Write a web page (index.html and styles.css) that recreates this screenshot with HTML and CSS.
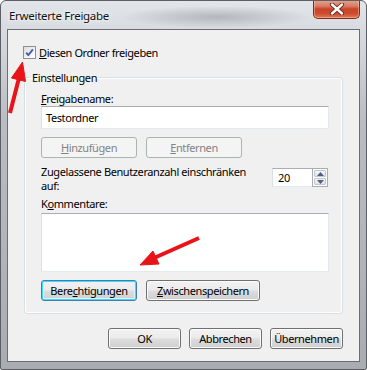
FILE: index.html
```html
<!DOCTYPE html>
<html lang="de">
<head>
<meta charset="utf-8">
<title>Erweiterte Freigabe</title>
<link rel="stylesheet" href="styles.css">
</head>
<body>
<div class="window">
  <div class="titlebar">
    <span class="title">Erweiterte Freigabe</span>
    <div class="close">
      <svg width="20" height="12" viewBox="0 0 20 12"><path d="M5 1.5 L15 10.5 M15 1.5 L5 10.5" stroke="#5a2418" stroke-width="4.2" stroke-linecap="round"/><path d="M5 1.5 L15 10.5 M15 1.5 L5 10.5" stroke="#ffffff" stroke-width="2.4" stroke-linecap="round"/></svg>
    </div>
  </div>
  <div class="client">
    <div class="check-row">
      <span class="checkbox"><svg width="11" height="11" viewBox="0 0 11 11"><path d="M2.2 5.6 L4.3 8.2 L8.9 2.4" fill="none" stroke="#4a5fb0" stroke-width="1.9" stroke-linejoin="round"/></svg></span>
      <span><u>D</u>iesen Ordner freigeben</span>
    </div>
    <fieldset class="group">
      <legend>Einstellungen</legend>
      <div class="label"><u>F</u>reigabename:</div>
      <div class="textbox">Testordner</div>
      <div class="btn-row">
        <span class="btn disabled"><u>H</u>inzufügen</span>
        <span class="btn disabled"><u>E</u>ntfernen</span>
      </div>
      <div class="limit-row">
        <div class="limit-label">Zu<u>g</u>elassene Benutzeranzahl einschränken auf:</div>
        <div class="spinner">
          <div class="spin-value">20</div>
          <div class="spin-buttons">
            <span class="spin up"><svg width="7" height="4" viewBox="0 0 7 4"><path d="M0 4 L3.5 0 L7 4Z" fill="#4d5f87"/></svg></span>
            <span class="spin down"><svg width="7" height="4" viewBox="0 0 7 4"><path d="M0 0 L3.5 4 L7 0Z" fill="#4d5f87"/></svg></span>
          </div>
        </div>
      </div>
      <div class="label comments">K<u>o</u>mmentare:</div>
      <div class="textarea"></div>
      <div class="btn-row">
        <span class="btn default">Bere<u>c</u>htigungen</span>
        <span class="btn wide"><u>Z</u>wischenspeichern</span>
      </div>
    </fieldset>
    <div class="footer">
      <span class="btn footer-btn">OK</span>
      <span class="btn footer-btn">Abbrechen</span>
      <span class="btn footer-btn">Übernehmen</span>
    </div>
  </div>
  <svg class="arrows" width="367" height="370" viewBox="0 0 367 370">
    <g fill="#e8141a" stroke="#e8141a">
      <path d="M10 113 L19 78" stroke-width="4" fill="none"/>
      <path d="M22.5 62 L25.5 81.5 L11.5 78 Z" stroke-width="1"/>
      <path d="M199 238 L154 258" stroke-width="4" fill="none"/>
      <path d="M140 265 L159 264 L153 251 Z" stroke-width="1"/>
    </g>
  </svg>
</div>
</body>
</html>
```
FILE: styles.css
```css
* { box-sizing: border-box; }
html, body { margin: 0; padding: 0; background: #ffffff; }
body {
  font-family: "Noto Sans", "Open Sans", sans-serif;
  font-size: 11px;
  letter-spacing: -0.4px;
  color: #000;
}
u { text-decoration: underline; text-underline-offset: 1px; }

.window {
  position: relative;
  width: 367px;
  height: 370px;
  border: 1px solid #5c5f63;
  border-radius: 6px 6px 2px 2px;
  padding: 0 6px 7px 6px;
  display: flex;
  flex-direction: column;
  background:
    radial-gradient(ellipse 95px 11px at 215px 16px, rgba(110,116,124,0.38), rgba(110,116,124,0) 100%),
    linear-gradient(180deg, #e2e5e9 0px, #d8dce0 28px, #b9bdc2 120px, #a9adb2 370px);
  overflow: hidden;
}

.titlebar {
  height: 28px;
  display: flex;
  align-items: center;
  padding-left: 2px;
}
.title { font-size: 11.5px; letter-spacing: -0.3px; color: #111; text-shadow: 0 0 6px #f4f6f8, 0 0 3px #ffffff; }
.close {
  margin-left: auto;
  align-self: flex-start;
  width: 47px;
  height: 19px;
  margin-top: -1px;
  border: 1px solid #7a2c1e;
  border-top: none;
  border-radius: 0 0 5px 5px;
  background: linear-gradient(180deg, #e9a491 0%, #d97a62 35%, #c7432a 50%, #cf4b2e 75%, #e07a52 100%);
  box-shadow: inset 0 0 0 1px rgba(255,210,190,0.45);
  display: flex;
  align-items: center;
  justify-content: center;
}

.client {
  flex: 1;
  background: #f0f0f0;
  border: 1px solid #6a6e73;
  padding: 15px 16px 0 16px;
  display: flex;
  flex-direction: column;
}

.check-row {
  height: 15px;
  display: flex;
  align-items: center;
  gap: 3px;
  margin-left: -1px;
}
.checkbox {
  width: 13px;
  height: 13px;
  border: 1px solid #8e8f8f;
  background: linear-gradient(135deg, #dcdcdc 0%, #f4f4f4 60%, #ffffff 100%);
  display: flex;
  align-items: center;
  justify-content: center;
}

.group {
  margin: 10px 0 0 0;
  padding: 6px 13px 12px 16px;
  border: 1px solid #d5dfe5;
  border-radius: 3px;
  min-width: 0;
  box-shadow: inset 0 0 0 1px #ffffff;
}
.group legend {
  padding: 0 2px;
  margin-left: -11px;
  line-height: 15px;
}

.label { line-height: 15px; }
.textbox {
  height: 23px;
  background: #fff;
  border: 1px solid;
  border-color: #abadb3 #e3e9ef #e3e9ef #dbdfe6;
  padding: 0 4px;
  display: flex;
  align-items: center;
}

.btn-row { display: flex; gap: 9px; margin-top: 8px; }
.btn {
  height: 21px;
  width: 96px;
  display: flex;
  align-items: center;
  justify-content: center;
  border: 1px solid #707070;
  border-radius: 3px;
  background: linear-gradient(180deg, #f2f2f2 0%, #ebebeb 48%, #dddddd 52%, #cfcfcf 100%);
  box-shadow: inset 0 0 0 1px #fbfbfb;
  white-space: nowrap;
}
.btn.disabled {
  color: #838383;
  border-color: #adb2b5;
  background: #f4f4f4;
  box-shadow: none;
}
.btn.default {
  border-color: #3c7fb1;
  box-shadow: inset 0 0 0 1px #48d8fb, inset 0 0 0 2px #dff3fc;
  background: linear-gradient(180deg, #f2f2f2 0%, #ebebeb 48%, #dddddd 52%, #cfcfcf 100%);
}
.btn.wide { width: 114px; }

.limit-row {
  display: flex;
  justify-content: space-between;
  align-items: flex-start;
  margin-top: 7px;
}
.limit-label { width: 220px; line-height: 14px; }
.spinner { display: flex; margin-top: 3px; margin-right: 1px; }
.spin-value {
  width: 40px;
  height: 19px;
  background: #fff;
  border: 1px solid;
  border-color: #abadb3 #e3e9ef #e3e9ef #dbdfe6;
  border-right: none;
  padding-left: 5px;
  display: flex;
  align-items: center;
}
.spin-buttons {
  width: 16px;
  height: 19px;
  display: flex;
  flex-direction: column;
  border: 1px solid #a8adb5;
  background: #fff;
  padding: 1px;
  gap: 1px;
}
.spin {
  flex: 1;
  display: flex;
  align-items: center;
  justify-content: center;
  background: linear-gradient(180deg, #f7f7f7, #dfe1e4);
  border: 1px solid #c2c6cc;
  border-radius: 1px;
}

.comments { margin-top: 3px; }
.textarea {
  height: 59px;
  margin-top: 2px;
  background: #fff;
  border: 1px solid;
  border-color: #abadb3 #e3e9ef #e3e9ef #dbdfe6;
}

.footer {
  display: flex;
  justify-content: flex-end;
  gap: 8px;
  margin-top: 14px;
}
.footer-btn { width: 73px; }

.arrows {
  position: absolute;
  left: -1px;
  top: -1px;
  pointer-events: none;
}
```
